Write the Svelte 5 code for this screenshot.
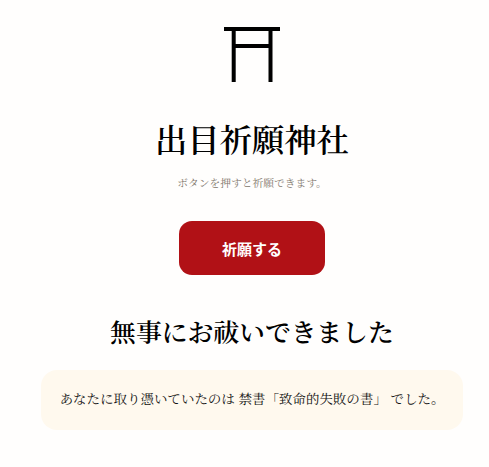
<script>
	let fortune = {
		title: "無事にお祓いできました",
		book: "禁書「致命的失敗の書」",
	};
	let prayed = true;

	function pray() {
		prayed = true;
	}
</script>

<style>
	:global(body) {
		background-color: #fffefd;
	}

	main {
		box-sizing: border-box;
		width: 422px;
		margin-left: 41px;
		padding-top: 24px;
		display: flex;
		flex-direction: column;
		align-items: center;
		color: #000;
		font-family: "Noto Serif JP", "Noto Serif CJK JP", "Liberation Serif", "Noto Sans CJK JP", serif;
		text-align: center;
		white-space: nowrap;
	}

	.torii {
		display: block;
		width: 60px;
		height: 60px;
	}

	h1 {
		margin: 30px 0 0;
		font-size: 32.3px;
		font-weight: 600;
		line-height: 48px;
	}

	.hint {
		margin: 12px 0 0;
		color: #80766b;
		font-size: 10.75px;
		line-height: 18px;
	}

	button {
		width: 146px;
		height: 54px;
		margin: 29px 0 0;
		padding: 0;
		border: none;
		border-radius: 13px;
		background-color: #b11116;
		color: #fff;
		font-family: "Noto Sans CJK JP", sans-serif;
		font-size: 15px;
		font-weight: 700;
		cursor: pointer;
	}

	h2 {
		margin: 36px 0 0;
		font-size: 25.8px;
		font-weight: 600;
		line-height: 40px;
	}

	.result {
		box-sizing: border-box;
		width: 100%;
		height: 60px;
		margin: 19px 0 0;
		border-radius: 16px;
		background-color: #fff9ee;
		color: #111;
		font-size: 13.5px;
		line-height: 56px;
	}
</style>

<main>
	<svg class="torii" viewBox="0 0 60 60">
		<path d="M2 5H58M11.7 5V58M48.5 5V58M11.7 22H48.5" fill="none" stroke="#000" stroke-width="4" />
	</svg>
	<h1>出目祈願神社</h1>
	<p class="hint">ボタンを押すと祈願できます。</p>
	<button on:click={pray}>祈願する</button>
	{#if prayed}
		<h2>{fortune.title}</h2>
		<p class="result">あなたに取り憑いていたのは {fortune.book} でした。</p>
	{/if}
</main>
